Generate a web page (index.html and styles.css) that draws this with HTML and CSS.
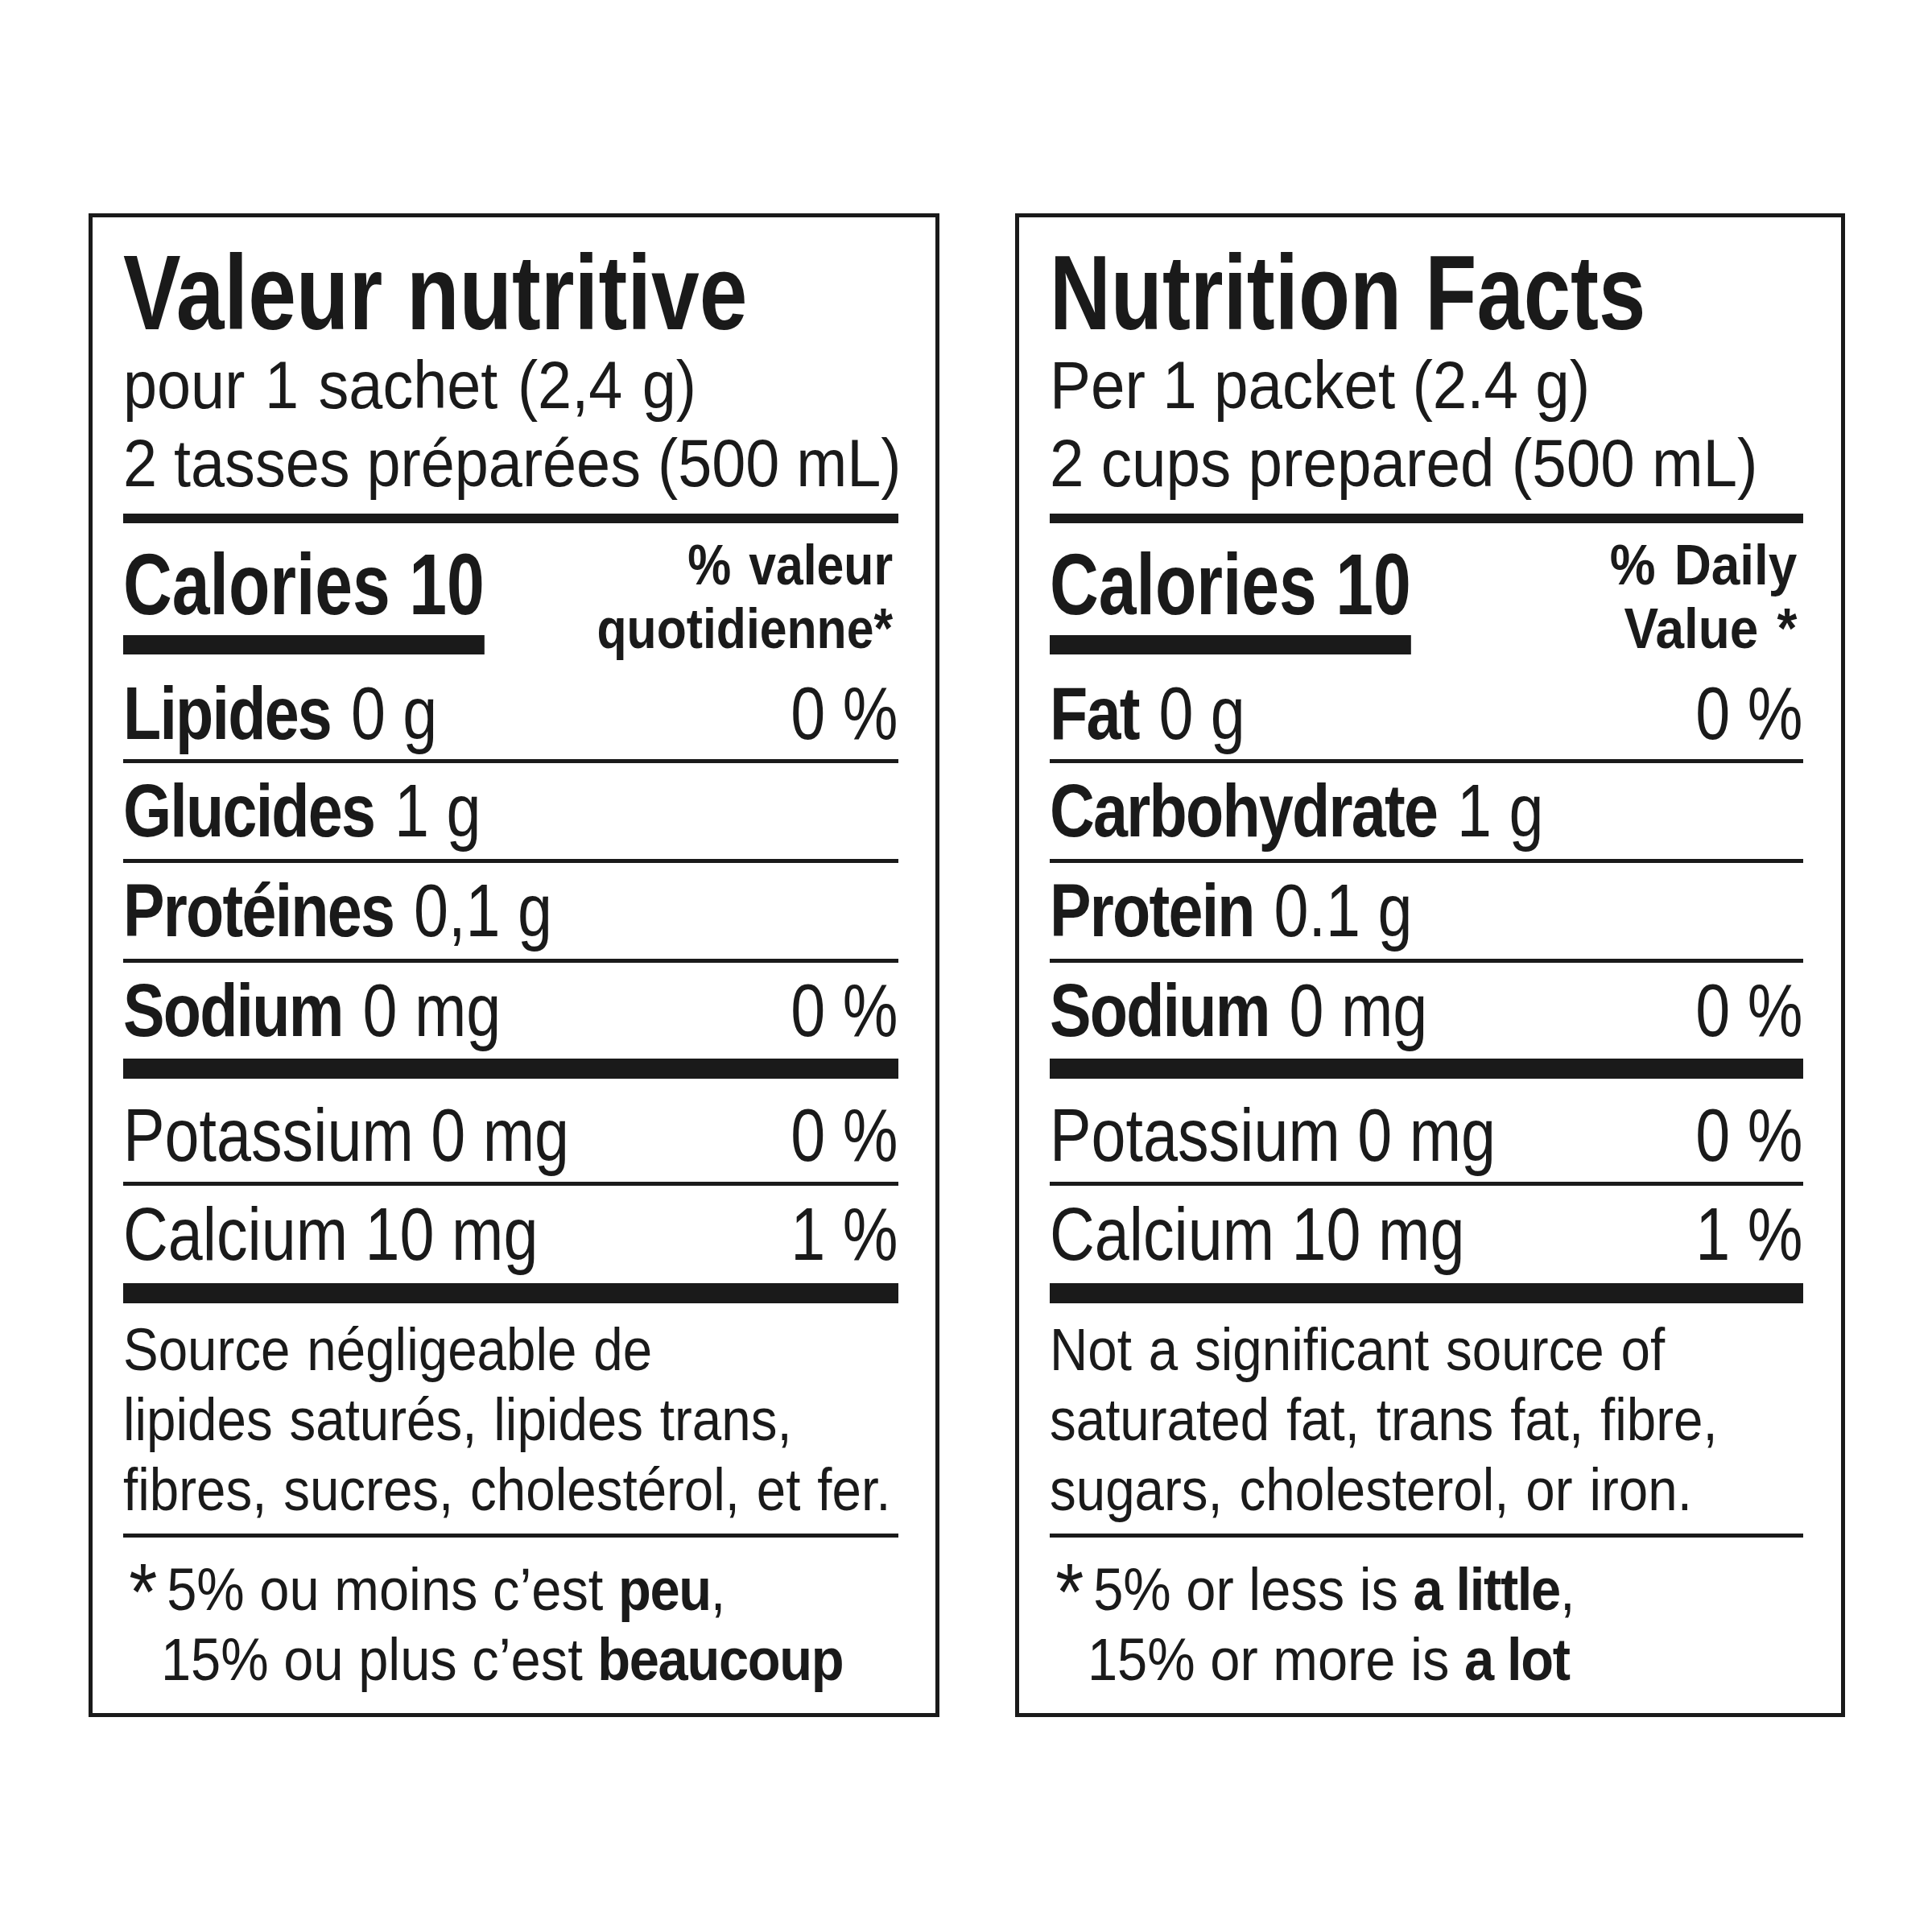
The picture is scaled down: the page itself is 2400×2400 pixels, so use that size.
FILE: index.html
```html
<!DOCTYPE html>
<html lang="fr">
<head>
<meta charset="utf-8">
<title>Valeur nutritive / Nutrition Facts</title>
<link rel="stylesheet" href="styles.css">
</head>
<body>
<div class="labels">
  <section class="label label-fr">
    <h1 class="title">Valeur nutritive</h1>
    <p class="serving"><span class="serving-first">pour 1 sachet (2,4 g)</span><br>2 tasses préparées (500 mL)</p>
    <div class="rule rule-md"></div>
    <div class="cal-row">
      <div class="cal"><div class="cal-text">Calories 10</div><div class="cal-bar"></div></div>
      <div class="dv">% valeur<br>quotidienne*</div>
    </div>
    <div class="row row-first"><span class="nut"><b>Lipides</b> 0 g</span><span class="pct">0 %</span></div>
    <div class="rule"></div>
    <div class="row"><span class="nut"><b>Glucides</b> 1 g</span></div>
    <div class="rule"></div>
    <div class="row"><span class="nut"><b>Protéines</b> 0,1 g</span></div>
    <div class="rule"></div>
    <div class="row"><span class="nut"><b>Sodium</b> 0 mg</span><span class="pct">0 %</span></div>
    <div class="rule rule-thick"></div>
    <div class="row row-after-thick"><span class="nut">Potassium 0 mg</span><span class="pct">0 %</span></div>
    <div class="rule"></div>
    <div class="row row-last"><span class="nut">Calcium 10 mg</span><span class="pct">1 %</span></div>
    <div class="rule rule-thick"></div>
    <p class="note">Source négligeable de<br>lipides saturés, lipides trans,<br>fibres, sucres, cholestérol, et fer.</p>
    <div class="rule"></div>
    <p class="foot"><span class="ast">*</span>5% ou moins c’est <b>peu</b>,<br>15% ou plus c’est <b>beaucoup</b></p>
  </section>

  <section class="label label-en">
    <h1 class="title">Nutrition Facts</h1>
    <p class="serving">Per 1 packet (2.4 g)<br>2 cups prepared (500 mL)</p>
    <div class="rule rule-md"></div>
    <div class="cal-row">
      <div class="cal"><div class="cal-text">Calories 10</div><div class="cal-bar"></div></div>
      <div class="dv">% Daily<br>Value *</div>
    </div>
    <div class="row row-first"><span class="nut"><b>Fat</b> 0 g</span><span class="pct">0 %</span></div>
    <div class="rule"></div>
    <div class="row"><span class="nut"><b>Carbohydrate</b> 1 g</span></div>
    <div class="rule"></div>
    <div class="row"><span class="nut"><b>Protein</b> 0.1 g</span></div>
    <div class="rule"></div>
    <div class="row"><span class="nut"><b>Sodium</b> 0 mg</span><span class="pct">0 %</span></div>
    <div class="rule rule-thick"></div>
    <div class="row row-after-thick"><span class="nut">Potassium 0 mg</span><span class="pct">0 %</span></div>
    <div class="rule"></div>
    <div class="row row-last"><span class="nut">Calcium 10 mg</span><span class="pct">1 %</span></div>
    <div class="rule rule-thick"></div>
    <p class="note">Not a significant source of<br>saturated fat, trans fat, fibre,<br>sugars, cholesterol, or iron.</p>
    <div class="rule"></div>
    <p class="foot"><span class="ast">*</span>5% or less is <b>a little</b>,<br>15% or more is <b>a lot</b></p>
  </section>
</div>
</body>
</html>
```

FILE: styles.css
```css
* {
  box-sizing: border-box;
}

body {
  margin: 0;
  background: #ffffff;
  color: #1a1a1a;
  font-family: "Liberation Sans", Arial, sans-serif;
}

.labels {
  display: flex;
  align-items: flex-start;
  gap: 94px;
  padding: 265px 0 0 110px;
}

.label {
  border: 5px solid #1a1a1a;
  padding: 28px 46px 23px 38px;
}

.label-fr {
  width: 1057px;
}

.label-en {
  width: 1031px;
  padding-right: 47px;
}

/* the reference face is a condensed grotesque: narrow the text horizontally */
.title {
  margin: 0;
  font-size: 132px;
  line-height: 132px;
  font-weight: 700;
  white-space: nowrap;
  transform: scaleX(0.795);
  transform-origin: left center;
}

.label-fr .title {
  transform: scaleX(0.813);
}

.serving {
  margin: 0;
  font-size: 84px;
  line-height: 97px;
  white-space: nowrap;
  transform: scaleX(0.9);
  transform-origin: left center;
}

.serving-first {
  word-spacing: 4px;
}

.label-en .serving {
  transform: scaleX(0.91);
}

.rule {
  height: 5px;
  background: #1a1a1a;
}

.rule-md {
  height: 12px;
  margin-top: 14px;
}

.rule-thick {
  height: 25px;
}

.cal-row {
  display: grid;
  grid-template-columns: minmax(0, 1fr) auto;
  height: 163px;
}

.cal {
  justify-self: start;
  display: flex;
  flex-direction: column;
  padding-top: 22px;
  transform: scaleX(0.786);
  transform-origin: left top;
}

.cal-text {
  font-size: 107px;
  line-height: 108px;
  font-weight: 700;
  white-space: nowrap;
}

.cal-bar {
  height: 24px;
  margin-top: 9px;
  background: #1a1a1a;
}

.dv {
  padding-top: 12px;
  padding-right: 8px;
  font-size: 71px;
  line-height: 79px;
  font-weight: 700;
  text-align: right;
  word-spacing: 6px;
  white-space: nowrap;
  transform: scaleX(0.855);
  transform-origin: right top;
}

.label-en .dv {
  transform: scaleX(0.9);
}

.row {
  display: flex;
  justify-content: space-between;
  height: 119px;
  font-size: 92px;
  line-height: 119px;
  white-space: nowrap;
}

.nut {
  transform: scaleX(0.84);
  transform-origin: left center;
}

.nut b {
  letter-spacing: -0.023em;
  margin-right: 4px;
}

.pct {
  transform: scaleX(0.84);
  transform-origin: right center;
}

.row-first {
  height: 130px;
  padding-top: 16px;
  line-height: 114px;
}

.row-after-thick {
  height: 128px;
  padding-top: 12px;
  line-height: 116px;
}

.row-last {
  height: 121px;
  line-height: 121px;
}

.note {
  margin: 0;
  padding: 14px 0 11px;
  font-size: 74px;
  line-height: 87px;
  word-spacing: 3px;
  white-space: nowrap;
  transform: scaleX(0.885);
  transform-origin: left center;
}

.foot {
  margin: 0;
  padding: 21px 0 0 52px;
  text-indent: -44px;
  font-size: 74px;
  line-height: 87px;
  white-space: nowrap;
  transform: scaleX(0.903);
  transform-origin: left center;
}

.foot b {
  letter-spacing: -0.02em;
}

.ast {
  display: inline-block;
  width: 52px;
  text-indent: 0;
  font-size: 100px;
  line-height: 0;
  vertical-align: -12px;
}
```
